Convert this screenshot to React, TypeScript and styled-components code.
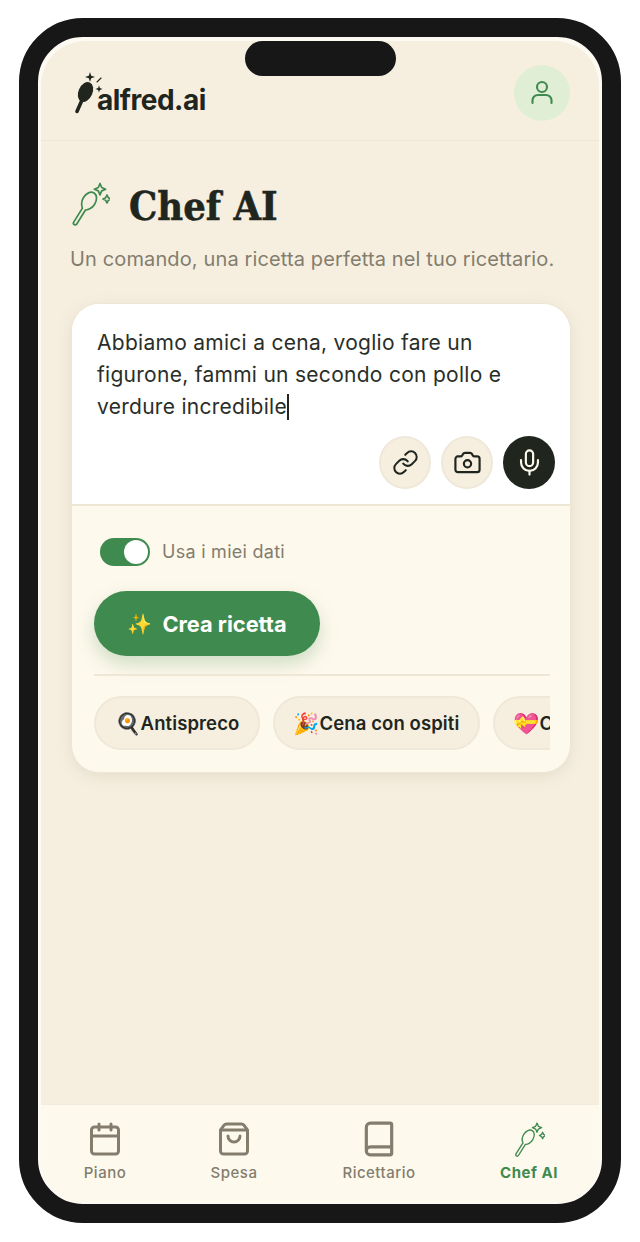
import React from 'react';
import styled, { createGlobalStyle } from 'styled-components';
import { Book, Calendar, Camera, Link, Mic, ShoppingBag } from 'lucide-react';

const GlobalStyle = createGlobalStyle`
  html, body {
    margin: 0;
    padding: 0;
    background: #ffffff;
  }
  * {
    box-sizing: border-box;
  }
`;

const tabs = [
  { label: 'Piano', Icon: Calendar, size: 36 },
  { label: 'Spesa', Icon: ShoppingBag, size: 36 },
  { label: 'Ricettario', Icon: Book, size: 38 },
];

const chips = [
  { emoji: '🍳', label: 'Antispreco' },
  { emoji: '🎉', label: 'Cena con ospiti' },
  { emoji: '💝', label: 'Cena romantica' },
];

const SPOON_OUTLINE =
  'M19 10.500C23 10.500 25.500 15 25.500 20C25.500 25 22.500 28.500 20.800 29.500L20.800 46A1.800 1.800 0 0 1 17.200 46L17.200 29.500C15.500 28.500 12.500 25 12.500 20C12.500 15 15 10.500 19 10.500Z';

const SpoonLogo = () => (
  <svg width="36" height="44" viewBox="0 0 36 44" fill="#20261e">
    <g transform="rotate(24 15.500 21)">
      <ellipse cx="15.500" cy="21" rx="7" ry="10.500" />
      <rect x="13.800" y="25" width="3.600" height="19" rx="1.800" />
    </g>
    <path d="M20 1l1.200 3.800L25 6l-3.800 1.200L20 11l-1.200-3.800L15 6l3.800-1.200z" />
    <path d="M29 14.500l.9 2.600 2.600.9-2.600.9-.9 2.600-.9-2.600-2.600-.9 2.600-.9z" />
    <path d="M27 11l4-4" stroke="#20261e" strokeWidth="1.100" strokeLinecap="round" />
  </svg>
);

const SpoonMagic = ({ width, height }: { width: number; height: number }) => (
  <svg width={width} height={height} viewBox="0 0 40 46" fill="none" stroke="#3f8a4f" strokeWidth="1.700" strokeLinejoin="round">
    <path d={SPOON_OUTLINE} transform="rotate(32 19 20)" />
    <path d="M30 2.500l1.700 4 4 1.700-4 1.700-1.700 4-1.700-4-4-1.700 4-1.700z" />
    <path d="M37 14l1.300 2.700 2.700 1.300-2.700 1.300-1.300 2.700-1.300-2.700-2.700-1.300 2.700-1.300z" />
  </svg>
);

export default function App() {
  return (
    <Page>
      <GlobalStyle />
      <Phone>
        <Notch />
        <Screen>
          <Header>
            <Logo>
              <SpoonLogo />
              <LogoText>alfred.ai</LogoText>
            </Logo>
            <Avatar>
              <svg width="30" height="30" viewBox="0 0 30 30" fill="none" stroke="#3f8a4f" strokeWidth="2.100" strokeLinecap="round">
                <circle cx="15" cy="9" r="5" />
                <path d="M5.500 25v-2.500a5.500 5.500 0 0 1 5.500-5.500h8a5.500 5.500 0 0 1 5.500 5.500V25" />
              </svg>
            </Avatar>
          </Header>
          <Main>
            <TitleRow>
              <SpoonMagic width={40} height={46} />
              <Title>Chef AI</Title>
            </TitleRow>
            <Subtitle>Un comando, una ricetta perfetta nel tuo ricettario.</Subtitle>
            <Card>
              <InputArea>
                <Prompt>
                  Abbiamo amici a cena, voglio fare un figurone, fammi un secondo con pollo e verdure incredibile
                  <Caret />
                </Prompt>
                <InputActions>
                  <RoundButton><Link size={27} strokeWidth={1.8} /></RoundButton>
                  <RoundButton><Camera size={29} strokeWidth={1.8} /></RoundButton>
                  <RoundButton $dark><Mic size={29} strokeWidth={1.8} /></RoundButton>
                </InputActions>
              </InputArea>
              <Controls>
                <ToggleRow>
                  <Toggle><Knob /></Toggle>
                  <ToggleLabel>Usa i miei dati</ToggleLabel>
                </ToggleRow>
                <CreateButton><Sparkle>✨</Sparkle>Crea ricetta</CreateButton>
                <Divider />
                <ChipRow>
                  {chips.map((chip) => (
                    <Chip key={chip.label}>
                      <ChipEmoji>{chip.emoji}</ChipEmoji>{chip.label}
                    </Chip>
                  ))}
                </ChipRow>
              </Controls>
            </Card>
          </Main>
          <TabBar>
            {tabs.map(({ label, Icon, size }) => (
              <Tab key={label}>
                <TabIcon><Icon size={size} strokeWidth={2} /></TabIcon>
                <TabLabel>{label}</TabLabel>
              </Tab>
            ))}
            <Tab $active>
              <TabIcon><SpoonMagic width={32} height={37} /></TabIcon>
              <TabLabel>Chef AI</TabLabel>
            </Tab>
          </TabBar>
        </Screen>
      </Phone>
    </Page>
  );
}

const Page = styled.div`
  width: 640px;
  height: 1242px;
  padding: 18px 19px 19px;
  font-family: Inter, 'Liberation Sans', sans-serif;
  overflow: hidden;
`;

const Phone = styled.div`
  position: relative;
  width: 602px;
  height: 1205px;
  padding: 4px 3px 2px;
  border: 19px solid #171717;
  border-radius: 64px;
  background: #fdfaf3;
`;

const Notch = styled.div`
  position: absolute;
  top: 4px;
  left: 207px;
  width: 151px;
  height: 35px;
  border-radius: 18px;
  background: #171717;
  z-index: 2;
`;

const Screen = styled.div`
  display: flex;
  flex-direction: column;
  height: 100%;
  border-radius: 44px;
  overflow: hidden;
  background: #f6efe0;
`;

const Header = styled.header`
  display: flex;
  align-items: center;
  justify-content: space-between;
  flex: none;
  height: 100px;
  padding: 12px 29px 8px;
  border-bottom: 1px solid #efe7d6;
`;

const Logo = styled.div`
  display: flex;
  align-items: flex-end;
`;

const LogoText = styled.div`
  margin-left: -9px;
  margin-bottom: -2px;
  font-size: 28px;
  font-weight: 700;
  letter-spacing: -0.5px;
  line-height: 34px;
  color: #20261e;
`;

const Avatar = styled.div`
  display: flex;
  align-items: center;
  justify-content: center;
  width: 56px;
  height: 56px;
  border-radius: 50%;
  background: #e0eed6;
`;

const Main = styled.main`
  flex: 1;
  padding: 38px 30px 0 29px;
`;

const TitleRow = styled.div`
  display: flex;
  align-items: center;
  gap: 19px;
  height: 50px;
`;

const Title = styled.h1`
  margin: 0;
  padding-top: 4px;
  font-family: 'DejaVu Serif', 'Liberation Serif', serif;
  font-stretch: condensed;
  font-size: 39.5px;
  font-weight: 700;
  color: #20261e;
  -webkit-text-stroke: 0.5px #20261e;
`;

const Subtitle = styled.p`
  margin: 16px 0 0;
  font-size: 20px;
  letter-spacing: 0.13px;
  line-height: 28px;
  color: #837d6e;
  white-space: nowrap;
`;

const Card = styled.section`
  width: 500px;
  height: 470px;
  margin: 30px 0 0 1px;
  border: 1px solid #eee6d4;
  border-radius: 28px;
  overflow: hidden;
  background: #fef9ed;
  box-shadow: 0 4px 16px rgba(120, 100, 60, 0.12);
`;

const InputArea = styled.div`
  display: flex;
  flex-direction: column;
  height: 202px;
  padding: 23px 15px 15px 25px;
  border-bottom: 2px solid #efe7d6;
  background: #ffffff;
`;

const Prompt = styled.div`
  flex: 1;
  font-size: 21px;
  letter-spacing: 0.28px;
  line-height: 32px;
  color: #2a2e28;
`;

const Caret = styled.span`
  display: inline-block;
  width: 2px;
  height: 26px;
  margin-bottom: -6px;
  background: #20261e;
`;

const InputActions = styled.div`
  display: flex;
  justify-content: flex-end;
  gap: 10px;
`;

const RoundButton = styled.div<{ $dark?: boolean }>`
  display: flex;
  align-items: center;
  justify-content: center;
  width: 52px;
  height: 53px;
  border-radius: 50%;
  border: ${(props) => (props.$dark ? 'none' : '2px solid #efe8d9')};
  background: ${(props) => (props.$dark ? '#20261e' : '#f6efe0')};
  color: ${(props) => (props.$dark ? '#fef9ed' : '#20261e')};
`;

const Controls = styled.div`
  padding: 32px 20px 0 22px;
`;

const ToggleRow = styled.div`
  display: flex;
  align-items: center;
  gap: 12px;
  margin-left: 6px;
`;

const Toggle = styled.div`
  display: flex;
  align-items: center;
  justify-content: flex-end;
  width: 50px;
  height: 28px;
  padding: 0 2px;
  border-radius: 14px;
  background: #3f8a4f;
`;

const Knob = styled.div`
  width: 24px;
  height: 24px;
  border-radius: 50%;
  background: #ffffff;
`;

const ToggleLabel = styled.span`
  font-size: 18px;
  letter-spacing: 0.27px;
  line-height: 26px;
  color: #837d6e;
`;

const CreateButton = styled.div`
  display: flex;
  align-items: center;
  justify-content: center;
  gap: 10px;
  width: 226px;
  height: 65px;
  margin-top: 25px;
  border-radius: 33px;
  background: #3f8a4f;
  color: #ffffff;
  font-size: 21.800px;
  font-weight: 700;
  box-shadow: 0 8px 18px rgba(63, 138, 79, 0.25);
`;

const Sparkle = styled.span`
  font-size: 20px;
`;

const Divider = styled.div`
  height: 2px;
  margin-top: 18px;
  background: #efe7d6;
`;

const ChipRow = styled.div`
  display: flex;
  gap: 13px;
  margin-top: 20px;
  overflow: hidden;
`;

const Chip = styled.div`
  display: flex;
  align-items: center;
  justify-content: center;
  flex: none;
  height: 54px;
  padding: 0 18.500px;
  border: 2px solid #efe8d9;
  border-radius: 27px;
  background: #f6efe0;
  color: #20261e;
  font-size: 18.500px;
  letter-spacing: 0.1px;
  font-weight: 600;
  white-space: nowrap;
`;

const ChipEmoji = styled.span`
  font-size: 21px;
`;

const TabBar = styled.nav`
  display: grid;
  grid-template-columns: 128px 130px 160px 140px;
  flex: none;
  height: 98px;
  padding-top: 15px;
  border-top: 1px solid #f3ecdc;
  background: #fef9ed;
`;

const Tab = styled.div<{ $active?: boolean }>`
  display: flex;
  flex-direction: column;
  align-items: center;
  gap: 6px;
  color: ${(props) => (props.$active ? '#3f8a4f' : '#837d6e')};
  font-weight: ${(props) => (props.$active ? 700 : 500)};
`;

const TabIcon = styled.div`
  display: flex;
  align-items: center;
  justify-content: center;
  height: 38px;
`;

const TabLabel = styled.span`
  font-size: 15px;
  letter-spacing: 0.5px;
  line-height: 18px;
`;
